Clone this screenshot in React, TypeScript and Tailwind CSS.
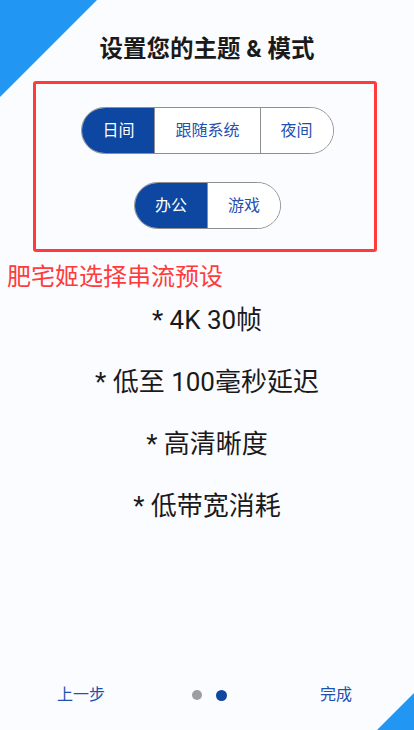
import React from "react";

const FONT = 'Roboto, "Noto Sans CJK SC", sans-serif';

function Segmented({ items, selected }: { items: string[]; selected: number }) {
  return (
    <div className="flex h-[47px] rounded-full border border-[#8f8f8f] overflow-hidden">
      {items.map((t, i) => (
        <div
          key={t}
          className={
            "flex items-center justify-center px-5 text-[16px] " +
            (i === selected ? "bg-[#0d47a1] text-white" : "bg-white text-[#1f50b0]") +
            (i > 0 ? " border-l border-[#8f8f8f]" : "")
          }
        >
          {t}
        </div>
      ))}
    </div>
  );
}

export default function App() {
  return (
    <div
      className="relative w-full h-[730px] bg-[#fbfcff] overflow-hidden flex flex-col"
      style={{ fontFamily: FONT }}
    >
      <svg className="absolute top-0 left-0" width="97" height="97" viewBox="0 0 97 97">
        <polygon points="0,0 97,0 0,97" fill="#2196f3" />
      </svg>
      <svg className="absolute bottom-0 right-0" width="37" height="37" viewBox="0 0 37 37">
        <polygon points="37,0 37,37 0,37" fill="#2196f3" />
      </svg>

      <div className="mt-[33px] h-[32px] leading-[32px] text-center text-[23.5px] font-bold text-[#1a1a1a]">
        设置您的主题 &amp; 模式
      </div>

      <div className="mt-[16px] ml-[33px] w-[344px] h-[171px] border-[3px] border-[#ff3b3b] rounded-[3px] flex flex-col items-center pt-[23px] pl-[5px] gap-[28px]">
        <Segmented items={["日间", "跟随系统", "夜间"]} selected={0} />
        <Segmented items={["办公", "游戏"]} selected={0} />
      </div>

      <div className="mt-[11px] pl-[7px] h-[28px] leading-[28px] text-[24px] text-[#ff3b3b]">
        肥宅姬选择串流预设
      </div>

      <div className="mt-[13px] flex flex-col items-center gap-[30px] text-[26px] text-[#1a1a1a]">
        <div className="h-[32px] leading-[32px]">* 4K 30帧</div>
        <div className="h-[32px] leading-[32px]">* 低至 100毫秒延迟</div>
        <div className="h-[32px] leading-[32px]">* 高清晰度</div>
        <div className="h-[32px] leading-[32px]">* 低带宽消耗</div>
      </div>

      <div className="mt-auto mb-[15px] h-[40px] flex items-center text-[16px] text-[#1f50b0]">
        <span className="ml-[57px]">上一步</span>
        <div className="ml-[87px] flex items-center gap-[14px]">
          <span className="w-[10px] h-[10px] rounded-full bg-[#9e9e9e]" />
          <span className="w-[11px] h-[11px] rounded-full bg-[#0d47a1]" />
        </div>
        <span className="ml-auto mr-[62px]">完成</span>
      </div>
    </div>
  );
}
